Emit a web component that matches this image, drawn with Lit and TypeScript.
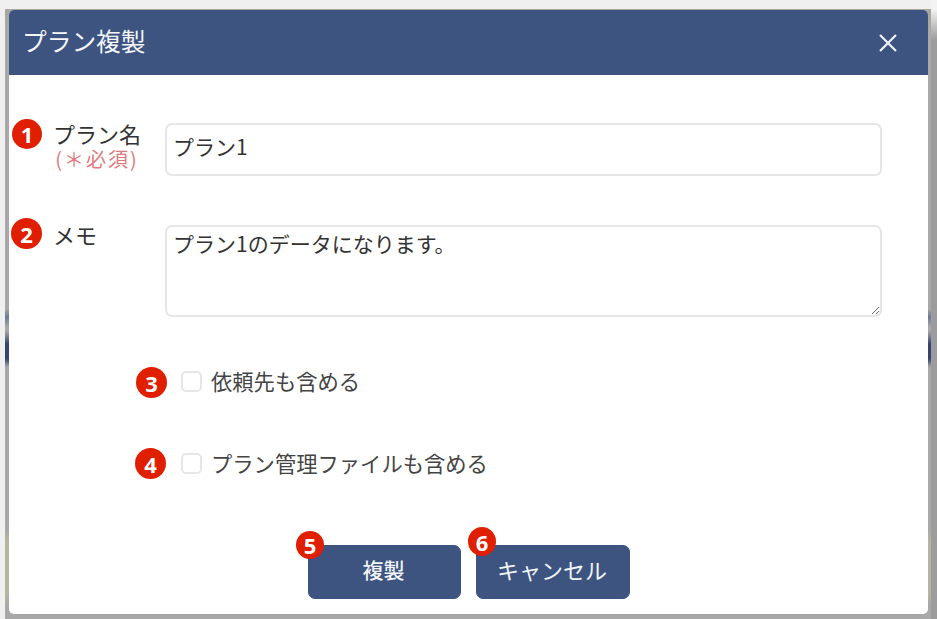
import { LitElement, html, css } from "lit";
import { customElement } from "lit/decorators.js";

@customElement("app-root")
export class AppRoot extends LitElement {
  static styles = css`
    :host {
      display: block;
      width: 937px;
      height: 619px;
      overflow: hidden;
      box-sizing: border-box;
      padding: 9px 6px 0 5px;
      background: linear-gradient(to bottom, #f3f3f3 9px, #c8c8c8 24px, #9c9c9c 40px) right top / 6px 100% no-repeat, #f0f0f0;
      font-family: "Noto Sans CJK JP", "Noto Sans", sans-serif;
      color: #333;
    }
    .scrim {
      height: 610px;
      box-sizing: border-box;
      padding: 1px 3px 5px 4px;
      background: linear-gradient(
        to bottom,
        #a8a8a0 0,
        #a8a8a8 30px,
        #a8a8a8 300px,
        #6a7a98 308px,
        #a8a8a8 318px,
        #a8a8a8 322px,
        #34466e 335px,
        #34466e 350px,
        #a8a8a8 358px,
        #a8a8a8 520px,
        #b8b49e 532px,
        #b8b49e 585px,
        #a8a8a8 596px
      );
    }
    .modal {
      height: 100%;
      background: #fff;
      border-radius: 5px;
      overflow: hidden;
      display: flex;
      flex-direction: column;
    }
    .head {
      height: 65px;
      flex: none;
      box-sizing: border-box;
      background: #3d5480;
      color: #f4f6fa;
      display: flex;
      align-items: center;
      justify-content: space-between;
      padding: 0 30px 0 13px;
      font-size: 24.7px;
      line-height: 1;
    }
    .head span { margin-top: -4px; }
    .head svg { display: block; }
    .body { position: relative; flex: 1; padding-top: 48px; }
    .row { position: relative; display: flex; align-items: flex-start; padding-left: 156px; padding-right: 46px; }
    .label {
      position: absolute;
      left: 43px;
      top: -3px;
      width: 90px;
      text-align: center;
      font-size: 22px;
      line-height: 26px;
    }
    .label.memo { text-align: left; top: -4px; left: 44px; }
    .req { display: block; font-size: 20px; line-height: 22px; letter-spacing: 2px; color: #dd7a7e; margin-top: 2px; white-space: nowrap; }
    input.text, textarea {
      display: block;
      width: 100%;
      box-sizing: border-box;
      border: 2px solid #e6e6e6;
      border-radius: 7px;
      font: 21px/30px "Noto Sans CJK JP", "Noto Sans", sans-serif;
      color: #333;
      padding: 5px 6px;
      outline: none;
      background: #fff;
    }
    input.text { height: 53px; padding-bottom: 13px; }
    textarea { height: 92px; padding-top: 1px; resize: vertical; }
    .memo-row { margin-top: 49px; }
    .check {
      position: relative;
      display: flex;
      align-items: center;
      padding-left: 172px;
      font-size: 21.3px;
      line-height: 26px;
      color: #444;
    }
    .c1 { margin-top: 51px; }
    .c2 { margin-top: 56px; }
    .box {
      width: 21px;
      height: 21px;
      box-sizing: border-box;
      border: 2px solid #e6e6e6;
      border-radius: 5px;
      margin-right: 9px;
      flex: none;
    }
    .actions {
      position: relative;
      display: flex;
      justify-content: flex-start;
      gap: 15px;
      padding-left: 299px;
      margin-top: 69px;
    }
    button {
      position: relative;
      height: 54px;
      width: 153px;
      border: 1px solid #3d5480;
      border-radius: 7px;
      background: #3d5480;
      color: #f2f4f8;
      font: 500 21px "Noto Sans CJK JP", "Noto Sans", sans-serif;
      padding: 0 2px 6px 0;
    }
    button.alt { width: 154px; font-weight: 400; font-size: 22px; }
    .badge {
      position: absolute;
      width: 30px;
      height: 30px;
      border-radius: 50%;
      background: #e01e00;
      color: #fff;
      display: flex;
      align-items: center;
      justify-content: center;
      font: 700 22px/1 "Open Sans", "Noto Sans", sans-serif;
    }
    .b1 { left: 3px; top: -4px; }
    .b2 { left: 2px; top: -7px; width: 31px; height: 31px; }
    .b3 { left: 127px; top: -1px; width: 31px; height: 31px; }
    .b4 { left: 126px; top: -2px; width: 31px; height: 31px; }
    .b5 { left: -13px; top: -15px; width: 28px; height: 28px; }
    .b6 { left: -9px; top: -19px; width: 28px; height: 29px; }
  `;

  render() {
    return html`
      <div class="scrim">
        <div class="modal">
          <div class="head">
            <span>プラン複製</span>
            <svg width="20" height="20" viewBox="0 0 20 20" fill="none" stroke="#f0f2f6" stroke-width="2.2">
              <path d="M2 2 L18 18 M18 2 L2 18" />
            </svg>
          </div>
          <div class="body">
            <div class="row">
              <span class="badge b1">1</span>
              <div class="label">プラン名<span class="req">(＊必須)</span></div>
              <input class="text" type="text" .value=${"プラン1"} />
            </div>
            <div class="row memo-row">
              <span class="badge b2">2</span>
              <div class="label memo">メモ</div>
              <textarea .value=${"プラン1のデータになります。"}></textarea>
            </div>
            <div class="check c1">
              <span class="badge b3">3</span>
              <span class="box"></span>依頼先も含める
            </div>
            <div class="check c2">
              <span class="badge b4">4</span>
              <span class="box"></span>プラン管理ファイルも含める
            </div>
            <div class="actions">
              <button>複製<span class="badge b5">5</span></button>
              <button class="alt">キャンセル<span class="badge b6">6</span></button>
            </div>
          </div>
        </div>
      </div>
    `;
  }
}
